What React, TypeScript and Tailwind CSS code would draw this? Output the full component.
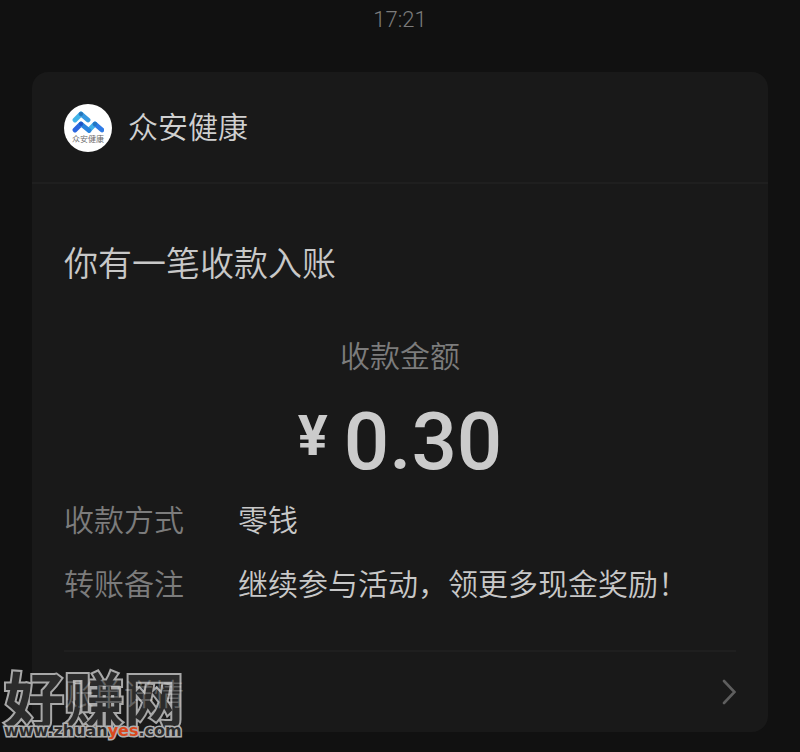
import React from "react";

const details = [
    { label: "收款方式", value: "零钱" },
    { label: "转账备注", value: "继续参与活动，领更多现金奖励！" },
];

const Logo = () => (
    <span className="flex h-12 w-12 flex-col items-center justify-center rounded-full bg-white">
        <svg viewBox="0 0 32 22" className="h-[22px] w-8" fill="none" strokeLinecap="round" strokeLinejoin="round" strokeWidth="4.8">
            <path d="M3 9L9 3" stroke="#42b4e8" />
            <path d="M9 3L16 9" stroke="#3598e0" />
            <path d="M3 19L9 13" stroke="#2b66e0" />
            <path d="M17 19L23 13" stroke="#40b0e8" />
            <path d="M23 13L30 19" stroke="#2f7be6" />
            <path d="M9 13L17 19.5" stroke="#2a83dd" />
            <circle cx="9" cy="3" r="2" fill="#2574b8" />
            <circle cx="9" cy="13" r="2" fill="#1d4fc4" />
            <circle cx="23" cy="13" r="2" fill="#2478bd" />
        </svg>
        <span className="text-[8px] leading-[12px] text-[#666]">众安健康</span>
    </span>
);

const Header = () => (
    <header className="flex items-start gap-4 border-b-2 border-[#1f1f1f] px-8 pt-8 pb-[30px]">
        <Logo />
        <h1 className="text-[30px] leading-[42px] text-[#d0d0d0]">众安健康</h1>
    </header>
);

const Amount = () => (
    <div className="flex flex-col items-center">
        <p className="text-[30px] leading-10 text-[#7c7c7c]">收款金额</p>
        <p className="mt-7 flex items-start gap-4 font-[Roboto] text-[#cbcbcb]">
            <span className="text-[56px] font-bold leading-[68px]">¥</span>
            <span className="text-[80px] font-medium leading-[80px]">0.30</span>
        </p>
    </div>
);

const Watermark = () => (
    <div className="pointer-events-none absolute bottom-3 left-0 whitespace-nowrap pl-1 font-bold [stroke-linejoin:round] [paint-order:stroke_fill]">
        <p className="text-[60px] leading-[50px] text-[#2b2b2b] [-webkit-text-stroke:4px_#a8a8a8]">
            好赚网
        </p>
        <p className="font-['DejaVu_Sans'] text-[16px] leading-[18px] text-[#2b2b2b] [-webkit-text-stroke:3px_#b0b0b0]">
            www.zhuan<span className="text-[#d9481c]">yes</span>.com
        </p>
    </div>
);

const App: React.FC = () => (
    <main className="relative min-h-screen bg-[#111] font-['Noto_Sans_CJK_SC',sans-serif] font-[350] antialiased">
        <time className="block pt-1 text-center font-[Roboto] text-[22px] leading-8 text-[#7c7c7c]">
            17:21
        </time>
        <section className="mx-8 mt-9 rounded-2xl bg-[#191919]">
            <Header />
            <div className="px-8 pt-14">
                <h2 className="text-[34px] leading-[44px] text-[#c8c8c8]">你有一笔收款入账</h2>
                <div className="mt-[50px]">
                    <Amount />
                </div>
                <dl className="mt-4 flex flex-col gap-6 text-[30px] leading-10">
                    {details.map((item) => (
                        <div key={item.label} className="flex">
                            <dt className="w-[174px] shrink-0 text-[#7c7c7c]">{item.label}</dt>
                            <dd className="text-[#c8c8c8]">{item.value}</dd>
                        </div>
                    ))}
                </dl>
                <a
                    href="#bill"
                    className="relative z-10 mt-12 flex h-[82px] items-center justify-between border-t-2 border-[#1f1f1f] text-[30px] leading-10 text-white/25"
                >
                    账单详情
                    <svg viewBox="0 0 14 26" className="h-[26px] w-[14px]" fill="none" stroke="#5e5e5e" strokeWidth="2.6" strokeLinecap="round">
                        <path d="M2 2L12.5 13L2 24" />
                    </svg>
                </a>
            </div>
        </section>
        <Watermark />
    </main>
);

export default App;
